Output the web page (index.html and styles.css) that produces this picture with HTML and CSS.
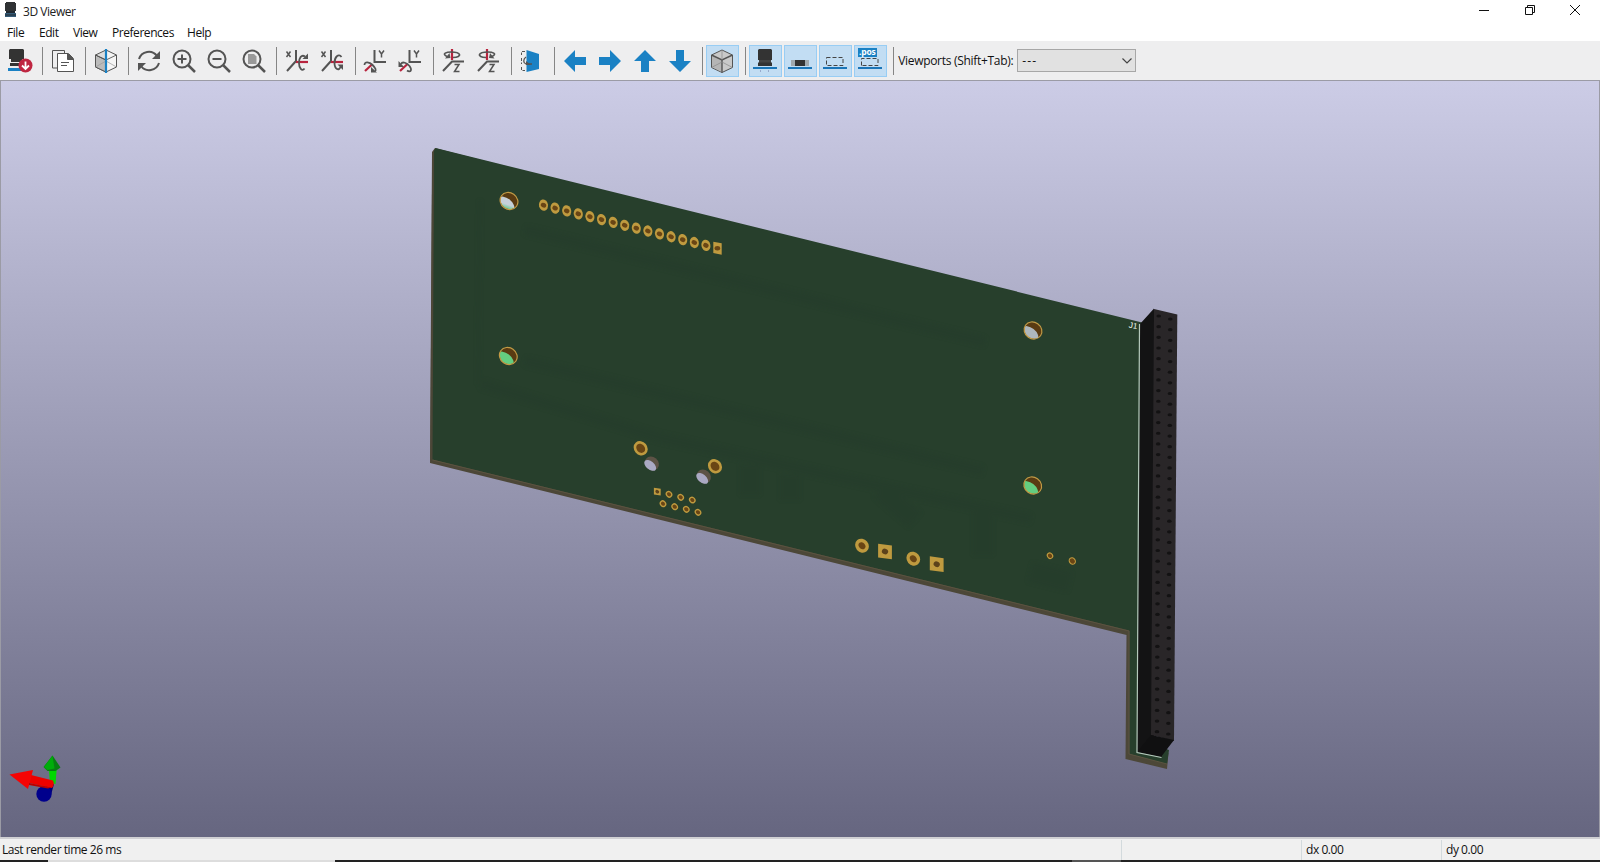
FILE: index.html
```html
<!DOCTYPE html>
<html lang="en">
<head>
<meta charset="utf-8">
<title>3D Viewer</title>
<link rel="stylesheet" href="styles.css">
</head>
<body>
<div class="window">
  <header class="titlebar">
    <svg class="app-icon" width="12" height="16" viewBox="0 0 12 16"><path fill="#303234" d="M1 0h9v1h1v8H0V1h1z"/><path fill="#202830" d="M1 9h9v2H1z"/><path fill="#365c78" d="M0 11h11v4H0z"/><path fill="#202830" d="M0 12.500h11v1H0z"/></svg>
    <span class="title">3D Viewer</span>
    <div class="controls">
      <svg width="10" height="10" viewBox="0 0 10 10"><path d="M0 5.500h10"/></svg>
      <svg width="10" height="10" viewBox="0 0 10 10"><path d="M.5 2.500h7v7h-7zM2.500 2.500v-2h7v7h-2"/></svg>
      <svg width="10" height="10" viewBox="0 0 10 10"><path d="M0 0l10 10M10 0L0 10"/></svg>
    </div>
  </header>
  <nav class="menubar">
    <span class="m-file">File</span><span class="m-edit">Edit</span><span class="m-view">View</span><span class="m-pref">Preferences</span><span class="m-help">Help</span>
  </nav>
  <div class="toolbar">
    <div class="tool"><svg viewBox="0 0 24 24"><path fill="#333" d="M2 0h13l1 1v9H1V1z"/><path fill="#333" d="M3 10h11v3H3z"/><path fill="#eee" d="M1 13h14v1H1zM3 17h11v1H3z"/><path fill="#333" d="M2 14h13v3H2z"/><path fill="#1a81c4" d="M0 19h13v3H0z"/><circle cx="17.500" cy="16.500" r="7" fill="#bf2641"/><path d="M17.500 12.500v7M14 16.500l3.500 3.500 3.500-3.500" fill="none" stroke="#fff" stroke-width="1.800"/></svg></div>
    <i class="sep"></i>
    <div class="tool"><svg viewBox="0 0 24 24" class="thin"><path d="M7 19H1.500V1.500h12V4"/><path fill="#fff" d="M6.500 4.500h11l5 5v13h-16z"/><path fill="#545454" d="M16.500 4.500v6h6z"/><path d="M10 13.500h8M10 16.500h6" stroke-width="1.200"/></svg></div>
    <i class="sep"></i>
    <div class="tool"><svg viewBox="0 0 24 24" class="thin"><path fill="#ddd" d="M12 1L1.500 6v12L12 23z"/><path fill="#bbb" d="M1.500 6L12 11v12L1.500 18z"/><path fill="#f5f5f5" d="M12 1l10.500 5v12L12 23z"/><path d="M1.500 6L12 11l10.500-5" stroke-width=".9"/><path d="M1.500 18L12 12l10.500 6" stroke="#999" stroke-width=".7"/><path d="M12 0v24" stroke="#1a81c4" stroke-width="2.200"/></svg></div>
    <i class="sep"></i>
    <div class="tool"><svg viewBox="0 0 24 24" class="line"><path d="M2 10A10.200 10.200 0 0 1 20 7M22 14A10.200 10.200 0 0 1 4 17"/><path class="dark" d="M23 2v8h-8zM1 22v-8h8z"/></svg></div>
    <div class="tool"><svg viewBox="0 0 24 24" class="line"><circle cx="10" cy="10" r="8.500"/><path d="M16 16l7 7" stroke-width="2.500"/><path d="M5.500 10h9M10 5.500v9"/></svg></div>
    <div class="tool"><svg viewBox="0 0 24 24" class="line"><circle cx="10" cy="10" r="8.500"/><path d="M16 16l7 7" stroke-width="2.500"/><path d="M5.500 10h9"/></svg></div>
    <div class="tool"><svg viewBox="0 0 24 24" class="line"><circle cx="10" cy="10" r="8.500"/><path d="M16 16l7 7" stroke-width="2.500"/><path fill="#999" stroke="none" d="M6 5h6l2.500 2.500V15H6z"/></svg></div>
    <i class="sep"></i>
    <div class="tool"><svg viewBox="0 0 24 24" class="line"><path d="M11 1v11L2 22"/><path class="red" d="M11 13h12"/><path d="M1.500 2.500l4 5.500m0-5.500l-4 5.500" stroke-width="1.500"/><path d="M19.500 19.500C17 23 14 19 14 14s2.500-9 6-6.500" stroke-width="1.800"/><path class="dark" d="M17.500 10h5.500V4.500z"/></svg></div>
    <div class="tool"><svg viewBox="0 0 24 24" class="line"><path d="M11 1v11L2 22"/><path class="red" d="M11 13h12"/><path d="M1.500 2.500l4 5.500m0-5.500l-4 5.500" stroke-width="1.500"/><path d="M21.500 8c-3-4-7 0-7 6s4.500 9 6.500 3" stroke-width="1.800"/><path class="dark" d="M17.500 15.500h5.500V21z"/></svg></div>
    <i class="sep"></i>
    <div class="tool"><svg viewBox="0 0 24 24" class="line"><path d="M11.500 1v12H23"/><path class="red" d="M9.500 15L2 22"/><path d="M16 1.500l2.500 3.500L21 1.500M18.500 5v3.500" stroke-width="1.500"/><path d="M1.500 16c0-4 5-3 8 0s4 5 2.500 6" stroke-width="1.800"/><path class="dark" d="M8 18v5.500h6z"/></svg></div>
    <div class="tool"><svg viewBox="0 0 24 24" class="line"><path d="M11.500 1v12H23"/><path class="red" d="M9.500 15L2 22"/><path d="M16 1.500l2.500 3.500L21 1.500M18.500 5v3.500" stroke-width="1.500"/><path d="M3 15c1.500-3 6-1 8.500 2 3 4 1 7-2.500 4.500" stroke-width="1.800"/><path class="dark" d="M.5 12v6H6z"/></svg></div>
    <i class="sep"></i>
    <div class="tool"><svg viewBox="0 0 24 24" class="line"><path class="red" d="M11 0v11"/><path d="M23 12.500H11L2 22"/><path d="M13.500 15.500h4.500l-4.500 7h5" stroke-width="1.500"/><path d="M6 7.500c-6-3 0-4.500 4-4.500 10 0 12 5 2 5.500" stroke-width="1.700"/><path class="dark" d="M4 9.500l5.500-.5-1-5z"/></svg></div>
    <div class="tool"><svg viewBox="0 0 24 24" class="line"><path class="red" d="M11 0v11"/><path d="M23 12.500H11L2 22"/><path d="M13.500 15.500h4.500l-4.500 7h5" stroke-width="1.500"/><path d="M16 7.500c6-3 0-4.500-4-4.500-10 0-12 5-2 5.500" stroke-width="1.700"/><path class="dark" d="M18.500 9.500L13 9l1-5z"/></svg></div>
    <i class="sep"></i>
    <div class="tool"><svg viewBox="0 0 24 24" class="thin"><path fill="#1a81c4" stroke="none" d="M7.500 1l12.500 4v15L7.500 23z"/><path d="M6 2.500H2.500V6M2.500 9v6M2.500 18v3.500H6" stroke-dasharray="3 1.500"/><path d="M7 8c-3 2-3 6 0 7h6" stroke-width="1.300"/><path fill="#545454" stroke="none" d="M7 12l5 4H7z"/></svg></div>
    <i class="sep"></i>
    <div class="tool"><svg viewBox="0 0 24 24" class="arrow"><path d="M1 12L12 1v7h11v8H12v7z"/></svg></div>
    <div class="tool"><svg viewBox="0 0 24 24" class="arrow"><path d="M23 12L12 1v7H1v8h11v7z"/></svg></div>
    <div class="tool"><svg viewBox="0 0 24 24" class="arrow"><path d="M12 1L1 12h7v11h8V12h7z"/></svg></div>
    <div class="tool"><svg viewBox="0 0 24 24" class="arrow"><path d="M12 23L1 12h7V1h8v11h7z"/></svg></div>
    <i class="sep"></i>
    <div class="tool on"><svg viewBox="0 0 24 24" class="thin"><path fill="#c9c9c9" d="M12 1l10.500 5v12.500L12 23.500 1.500 18.500V6z"/><path fill="#b5b5b5" stroke="none" d="M2 6.500L12 11.500V23L2 18z"/><path d="M1.500 6L12 11l10.500-5M12 11v12.500" stroke-width="1.400"/><path d="M12 1v10M1.500 18.500L12 13l10.500 5.500" stroke="#888" stroke-width=".7"/></svg></div>
    <i class="sep"></i>
    <div class="tool on"><svg viewBox="0 0 24 24"><path fill="#333" d="M6 0h12l1 1v10H5V1z"/><path fill="#444" d="M6 11h12v3H6z"/><path fill="#333" d="M5 13.500h14v3.500H5z"/><path d="M7.500 18v5M15.500 18v5" stroke="#9ac" stroke-dasharray="2 1"/><path fill="#1a75b8" d="M0 18h24v2H0z"/></svg></div>
    <div class="tool on"><svg viewBox="0 0 24 24"><path fill="#a0a9af" d="M3 11h18v6H3z"/><path fill="#333" d="M7 11h10v6H7z"/><path fill="#1a75b8" d="M0 18h24v2H0z"/></svg></div>
    <div class="tool on"><svg viewBox="0 0 24 24"><path d="M3.500 8.500h16.500v8H3.500z" fill="none" stroke="#444" stroke-dasharray="4 2"/><path fill="#1a75b8" d="M0 18h24v2H0z"/></svg></div>
    <div class="tool on"><svg viewBox="0 0 24 24"><path d="M3.500 16.500V9.500h16.500v7z" fill="none" stroke="#444" stroke-dasharray="4 2"/><path fill="#1a81c4" d="M0-1h19v9H0z"/><text class="pos" x="1" y="6">.pos</text><path fill="#1a75b8" d="M0 18h24v2H0z"/></svg></div>
    <i class="sep"></i>
    <label class="vp-label">Viewports (Shift+Tab):</label>
    <div class="select"><span>---</span><svg width="10" height="6" viewBox="0 0 10 6"><path d="M.5.5L5 5 9.500.5" fill="none" stroke="#444" stroke-width="1.200"/></svg></div>
  </div>
  <main class="canvas">
    <svg class="scene" viewBox="1 81 1598 756">
      <defs>
        <filter id="soft" x="-20%" y="-50%" width="140%" height="200%"><feGaussianBlur stdDeviation="2"/></filter>
        <clipPath id="hole"><ellipse rx="9" ry="8" transform="rotate(35)"/></clipPath>
        <g id="mount">
          <g clip-path="url(#hole)"><path fill="#5a3b12" d="M-12-12h24v24h-24z"/><ellipse class="through" cx="-3" cy="3" rx="9.500" ry="5.800" transform="rotate(38 -3 3)"/></g>
          <ellipse rx="9.200" ry="8.200" transform="rotate(35)" fill="none" stroke="#c39a45" stroke-width="1.200"/>
        </g>
        <linearGradient id="pale" x1="0" y1="0" x2="0" y2="1" gradientTransform="rotate(-30 .5 .5)"><stop offset=".5" stop-color="#c6d0d8"/><stop offset=".8" stop-color="#6dcc96"/></linearGradient>
      </defs>
      <path fill="#4c4738" d="M432 152l3-4 15 4L1142 330V740L1168.500 753 1167 769 1125.500 759 1126.500 635 430 463z"/>
      <path fill="#273f2c" d="M434 151l1.500-3L1142 322.500V740L1169 750 1167 764 1129.500 754V630.500L432.500 459.500z"/>
      <path fill="none" stroke="#4c4738" stroke-width="1.500" d="M433 152l-2 308"/>
      <path fill="none" stroke="#5b5340" stroke-width="1" d="M432.500 460L1129 631v123l38 10"/>
      <g class="shade" filter="url(#soft)">
        <path d="M525 230L985 342M525 361L983 471M481 384l180 54 250 55 120 26" stroke-width="10"/>
        <path d="M480 200l-2 184" stroke-width="2"/>
        <path d="M750 465v30M790 475v25M880 490l35 30M983 505v50M1030 572l40 10" stroke-width="20"/>
      </g>
      <use href="#mount" class="m-pale" transform="translate(509 201)"/>
      <use href="#mount" class="m-green" transform="translate(508.300 356)"/>
      <use href="#mount" class="m-grey" transform="translate(1033 330.500)"/>
      <use href="#mount" class="m-green" transform="translate(1032.700 485.500)"/>
      <g transform="translate(651.800 463.500) rotate(40)"><ellipse rx="7.500" ry="6.500" fill="#5d5346"/><ellipse cx="0" cy="2.500" rx="7" ry="4" fill="#aaa9c3"/></g>
      <g transform="translate(703.800 476.500) rotate(40)"><ellipse rx="7.500" ry="6.500" fill="#5d5346"/><ellipse cx="0" cy="2.500" rx="7" ry="4" fill="#aaa9c3"/></g>
      <g id="pads"></g>
      <text class="silk" transform="translate(1128.500 327.500) rotate(10)">J1</text>
      <path fill="#131314" d="M1140 324l14-15.500v428L1162 757l-25-6z"/>
      <path fill="#292628" d="M1154 309l23.300 5.500L1174 741l-23-6z"/>
      <path fill="#101011" d="M1151 735l23 5-13 17-24-5z"/>
      <path fill="none" stroke="#b5c9bc" stroke-width="1.200" d="M1139.500 324L1137 752.500l24.500 5"/>
      <g id="sockets" fill="#131213"></g>
      <g class="gizmo">
        <path fill="#000078" d="M46 786l8-2-3 11z"/>
        <path fill="#00d800" d="M48.500 765h8.500l-1.500 19-5.500-1z"/>
        <path fill="#087f12" d="M52.500 755.500l8 12-5 3.500h-8l-4-4z"/>
        <path fill="#00ad0b" d="M52.500 755.500l2 13-7 1.500-3.500-3z"/>
        <circle cx="44" cy="794" r="7.700" fill="#00008c"/>
        <path fill="#e00" d="M31 775l22 5.500q2 4-1 7.500L29 783z"/>
        <path fill="#f50404" d="M9.500 774.500L33 770l-5 19z"/>
        <path fill="#bc0000" d="M29 783l22 4.500-3 1-19-3.500z"/>
      </g>
    </svg>
  </main>
  <footer class="statusbar"><span class="s-main">Last render time 26 ms</span><span class="s-blank"></span><span class="s-dx">dx 0.00</span><span class="s-dy">dy 0.00</span></footer>
  <div class="edge"></div>
</div>
<script src="scene.js"></script>
</body>
</html>
```
FILE: styles.css
```css
body { margin: 0; overflow: hidden; background: #fff; }
.window { width: 1600px; height: 862px; display: flex; flex-direction: column; font: 12px/16px "Open Sans", "Noto Sans", sans-serif; letter-spacing: -.45px; color: #111; }
.titlebar { height: 23px; display: flex; align-items: center; background: #fff; }
.app-icon { margin: -3px 6px 0 5px; }
.title { color: #222; padding-top: 1px; }
.controls { margin-left: auto; display: flex; gap: 35.500px; padding: 0 20px 3px 0; }
.controls svg { display: block; fill: none; stroke: #111; stroke-width: 1; }
.menubar { height: 18px; display: flex; align-items: center; padding-left: 7px; background: #fff; }
.menubar span { padding-top: 1px; }
.m-file { width: 32px; }
.m-edit { width: 34px; }
.m-view { width: 39px; }
.m-pref { width: 75px; }
.toolbar { height: 39px; display: flex; align-items: center; padding-left: 2px; background: #eeeeef; }
.tool { flex: none; box-sizing: border-box; width: 33px; height: 32px; margin: 1px; border: 1px solid transparent; display: flex; align-items: center; justify-content: center; }
.tool svg { width: 24px; height: 24px; overflow: visible; }
.on { background: #c2ddf3; border-color: #98cdf4; }
.on svg { margin-left: -1px; }
.sep { flex: none; width: 8.150px; height: 28px; background: linear-gradient(#858585, #858585) 5px 0 / 1px 100% no-repeat; }
.line { fill: none; stroke: #545454; stroke-width: 2; }
.thin { fill: none; stroke: #545454; stroke-width: 1; }
.line .red { stroke: #b8243e; stroke-width: 2.200; }
.line .dark { fill: #545454; stroke: none; }
.arrow { fill: #1a81c4; }
.pos { font: bold 8.500px "Open Sans", sans-serif; letter-spacing: -.2px; fill: #fff; }
.vp-label { margin-left: 1.600px; width: 119px; white-space: nowrap; letter-spacing: -.3px; padding-top: 1px; }
.select { box-sizing: border-box; width: 119px; height: 23px; border: 1px solid #a7a7a7; background: #e1e1e1; display: flex; align-items: center; justify-content: space-between; padding: 0 3px 0 4px; letter-spacing: 1.200px; }
.canvas { box-sizing: border-box; height: 757px; border: solid #9b9ba5; border-width: 1px 1px 0; background: linear-gradient(#cccce6, #666680); }
.scene { display: block; width: 1598px; height: 756px; }
.through { fill: inherit; }
.m-pale { fill: url(#pale); }
.m-green { fill: #64cd80; }
.m-grey { fill: #aeb7bd; }
.shade { fill: none; stroke: #20382a; opacity: .22; }
.ring { fill: #6a4514; stroke: #bf9a3f; }
.silk { font: 8px "Liberation Sans", sans-serif; letter-spacing: 0; fill: #f2faf4; }
.statusbar { box-sizing: border-box; height: 23px; border-top: 2px solid #d0d0d3; display: flex; align-items: center; background: #f0f0f0; }
.statusbar span { box-sizing: border-box; height: 20px; line-height: 20px; padding-left: 4px; border-left: 1px solid #d3dadd; }
.statusbar .s-main { width: 1121px; padding-left: 2px; border: 0; }
.s-blank { width: 180px; }
.s-dx { width: 140px; }
.s-dy { flex: 1; }
.edge { height: 2px; background: linear-gradient(90deg, #222 0 48px, #ddd 48px 335px, #222 335px 1072px, #555 1072px 1121px, #222 1121px); }
```
FILE: scene.js
```js
const NS = 'http://www.w3.org/2000/svg';

function add(parent, tag, attrs) {
  const el = document.createElementNS(NS, tag);
  for (const key in attrs) el.setAttribute(key, attrs[key]);
  parent.appendChild(el);
}

const pads = document.getElementById('pads');

function round(x, y, r, w) {
  add(pads, 'ellipse', { class: 'ring', rx: r * 1.12, ry: r * .96, 'stroke-width': w, transform: `translate(${x} ${y}) rotate(50)` });
}

function square(x, y, half, r) {
  add(pads, 'path', { fill: '#bf9a3f', d: `M${-half} ${-half}h${half * 2}v${half * 2}h${-half * 2}z`, transform: `translate(${x} ${y}) skewY(8)` });
  add(pads, 'ellipse', { fill: '#5c421b', rx: r, ry: r * .85, transform: `translate(${x} ${y}) rotate(25)` });
}

// 16-pin display header: tall oval pads
for (let i = 0; i < 15; i++) {
  const at = `translate(${543.5 + i * 11.6} ${205.2 + i * 2.87})`;
  add(pads, 'ellipse', { fill: '#bf9a3f', rx: 4.5, ry: 5.7, transform: at + ' rotate(-12)' });
  add(pads, 'ellipse', { fill: '#6a4514', rx: 2.8, ry: 2.3, transform: at + ' rotate(25)' });
}
add(pads, 'path', { fill: '#bf9a3f', d: 'M713.3 241.8l8.400 1.500v11.500l-8.400-1.800z' });
add(pads, 'ellipse', { fill: '#6a4514', cx: 717.4, cy: 248.2, rx: 2.8, ry: 2.2 });

// RJ45 shield and signal pins
round(640.7, 448.3, 5.6, 2.6);
round(715, 466.3, 5.6, 2.6);
square(657.3, 491.7, 3.4, 2);
[[669, 494.3], [680.7, 497.3], [692.3, 500], [663, 503.7], [674.7, 506.7], [686.3, 509.3], [698, 512.3]]
  .forEach(([x, y]) => round(x, y, 2.6, 1.3));

// Power terminals
round(862, 545.7, 5, 3.5);
round(913.3, 558.7, 5, 3.5);
square(885, 551.5, 6.9, 3.2);
square(936.7, 564.2, 6.9, 3.2);
round(1050, 555.7, 2.6, 1.1);
round(1072.3, 561, 3, 1.1);

// Two columns of 40 sockets on the edge connector
const sockets = document.getElementById('sockets');
for (let i = 0; i < 40; i++) {
  const t = i / 39;
  add(sockets, 'ellipse', { cx: 1158.7 - t * 1.7, cy: 316 + t * 415.7, rx: 2.3, ry: 1.6 });
  add(sockets, 'ellipse', { cx: 1170.3 - t * 2, cy: 319 + t * 415, rx: 2.3, ry: 1.6 });
}
```
